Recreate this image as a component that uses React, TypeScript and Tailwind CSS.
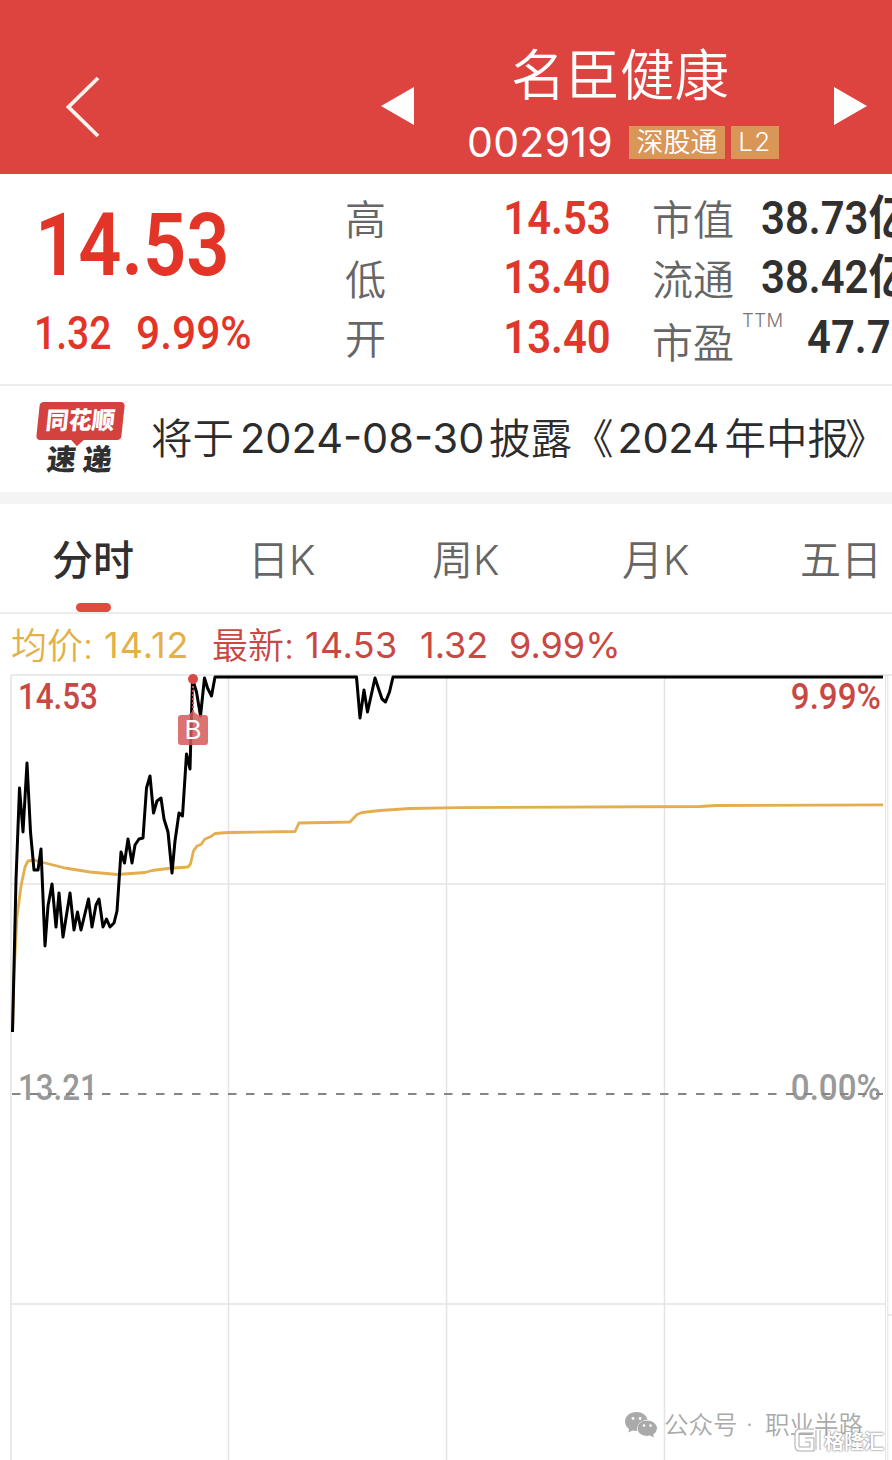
import type { ReactNode } from "react";

const CJK = "font-['Inter','Noto_Sans_CJK_SC',sans-serif]";
const DIN = "font-['Roboto','Noto_Sans_CJK_SC',sans-serif]";

const PRICE =
  "12.5,1032 16,880 19.5,788 23,832 27,763 30.5,832 34,870 38,870 41,849 45,946 48,906 52,884 56,927 59,893 63,937 70,893 74,930 77.5,912 81,930 88.5,899 92,927 96,905 99,899 103,927 106.5,919 110,927 114,923 117,911 121,852 124.5,863 128,839 132,863 135,845 139,839 143,838 146.5,788 150,776 153.5,813 157,801 161,798 164,819 168,832 172,873 175,841 179,813 182.5,816 186.5,754 190,769 192.5,679 196.5,692 200.5,716 204.5,678 207.5,688 211.5,696 215,677 356.5,677 360,718 364,690 367.5,712 375,678 382,699 385.5,702 389.5,692 393,677 883,677";

const AVERAGE =
  "M12.5 1032L14 975L17 917L21 886L25 867L28 861L34 860L45 863L65 868L90 872L117 874.500L145 872.500L152 870.500L168 868.500L188 867L190.500 864L193.500 851L197 846L201 844.500L205 839L211 836.500L215 833.500L228 832.500L295 831.500L299 823L350 822L357 814.500L362 812.500L380 810.500L410 808.500L460 807.700L700 806.500L716 805.500L883 804.800";

function Stat({ label, value, mark }: { label: string; value: string; mark?: string }) {
  return (
    <div className="flex h-[59.5px] items-center whitespace-nowrap">
      <span className={"flex w-[84px] shrink-0 text-[41px] text-[#666] " + (mark ? "pt-[16px]" : "pt-[8px]")}>{label}</span>
      {mark && <span className="-mt-8 ml-[6px] w-[65px] shrink-0 text-[18.5px] tracking-[0.5px] text-[#777]">{mark}</span>}
      <span className={DIN + " mt-px origin-left scale-x-[0.89] text-[47px] font-semibold text-[#303030] " + (mark ? "" : "ml-[25px]")}>{value}</span>
    </div>
  );
}

function Range({ label, value }: { label: string; value: string }) {
  return (
    <div className="flex h-[59.5px] items-center justify-between">
      <span className="pt-[8px] text-[41px] text-[#666]">{label}</span>
      <span className={DIN + " mt-px origin-right scale-x-[0.89] text-[47px] font-semibold text-[#de382c]"}>{value}</span>
    </div>
  );
}

function Tab({ children, className }: { children: ReactNode; className: string }) {
  return <span className={"shrink-0 whitespace-nowrap " + className}>{children}</span>;
}

export default function App() {
  return (
    <div className={CJK + " flex h-[1460px] w-[892px] flex-col overflow-hidden bg-white leading-none"}>
      <header className="flex h-[174px] shrink-0 bg-[#dd443f] text-white">
        <svg className="ml-[60px] mt-[70px] h-[72px] w-[44px]" viewBox="0 0 44 72" fill="none">
          <path d="M38 8L8.500 37L38 66" stroke="#fff3ee" strokeWidth="3.800" />
        </svg>
        <svg className="ml-[275px] mt-[85px] h-[42px] w-[38px]" viewBox="0 0 38 42">
          <path d="M2 21L35 2V40Z" fill="white" />
        </svg>
        <div className="ml-[50px] flex w-[313px] flex-col pt-[45px]">
          <h1 className="ml-[44px] text-[54.5px] font-[350] leading-[60px]">名臣健康</h1>
          <div className="mt-[15px] flex h-[44px] items-center">
            <span className="w-[162px] shrink-0 text-[41px] font-normal tracking-[0.3px]">002919</span>
            <span className="flex h-[33px] w-[96px] shrink-0 items-center justify-center bg-[#d99656] text-[27px] font-[350]">深股通</span>
            <span className="ml-[6px] flex h-[33px] w-[48px] shrink-0 items-center justify-center bg-[#d99656] text-[26px] font-[350] tracking-[1.5px]">L2</span>
          </div>
        </div>
        <svg className="ml-[52px] mt-[85px] h-[42px] w-[38px]" viewBox="0 0 38 42">
          <path d="M35 21L2 2V40Z" fill="white" />
        </svg>
      </header>

      <section className="flex h-[212px] shrink-0 border-b-2 border-[#ececec]">
        <div className={DIN + " w-[345px] text-[#e23528]"}>
          <div className="ml-[35px] mt-[27px] origin-left scale-x-[0.86] text-[88px] font-semibold leading-[88px]">14.53</div>
          <div className="ml-[34px] mt-[20px] flex text-[47px] font-medium leading-[47px]">
            <span className="w-[102px] origin-left scale-x-[0.83]">1.32</span>
            <span className="origin-left scale-x-[0.905]">9.99%</span>
          </div>
        </div>
        <div className="flex w-[266px] flex-col pt-[13px] font-[350]">
          <Range label="高" value="14.53" />
          <Range label="低" value="13.40" />
          <Range label="开" value="13.40" />
        </div>
        <div className="ml-[41px] flex w-[240px] flex-col overflow-hidden pt-[13px] font-[350]">
          <Stat label="市值" value="38.73亿" />
          <Stat label="流通" value="38.42亿" />
          <Stat label="市盈" value="47.72" mark="TTM" />
        </div>
      </section>

      <section className="flex h-[106px] shrink-0 items-center">
        <div className="-mt-[2px] ml-[38px] flex w-[113px] shrink-0 flex-col">
          <div className="relative flex h-[38px] w-[85px] -skew-x-6 items-center justify-center rounded-[4px] bg-[#d3423f] text-[23px] font-black text-white">
            <span className="scale-y-[1.05]">同花顺</span>
            <span className="absolute -bottom-[4px] left-[36px] size-[11px] rotate-45 bg-[#d3423f]" />
          </div>
          <div className="ml-[9px] mt-[5px] flex -skew-x-6 gap-[7px] text-[29px] font-black leading-[29px] text-[#303030]">
            <span>速</span><span>递</span>
          </div>
        </div>
        <p className="flex shrink-0 items-center whitespace-nowrap text-[41.500px] font-[350] text-[#2c2c2c]">
          <span className="pt-[2px]">将于</span>
          <span className="ml-[6px] w-[249px] text-[41.500px] font-normal">2024-08-30</span>
          <span className="pt-[2px]">披露《</span>
          <span className="ml-[4px] w-[107px] text-[41.500px] font-normal tracking-[-0.4px]">2024</span>
          <span className="pt-[2px]">年中报</span>
          <span className="-ml-[4px] w-[42px] pt-[2px]">》</span>
        </p>
      </section>
      <div className="h-[12px] shrink-0 bg-[#f4f4f4]" />

      <nav className="flex h-[110px] shrink-0 border-b-2 border-[#ececec] pt-[35px] text-[41px] font-[350] leading-[42px] text-[#666]">
        <Tab className="relative ml-[52px] w-[196px] font-medium text-[#303030]">
          分时
          <span className="absolute left-[24px] top-[64px] h-[9px] w-[35px] rounded-full bg-[#e04b40]" />
        </Tab>
        <Tab className="w-[184px]">日K</Tab>
        <Tab className="w-[190px]">周K</Tab>
        <Tab className="w-[178px]">月K</Tab>
        <Tab className="w-[92px]">五日</Tab>
      </nav>

      <div className="flex h-[60px] shrink-0 items-center whitespace-nowrap pl-[11px] pt-[2px] text-[36px] font-[350] text-[#c84844]">
        <span className="flex w-[201px] items-center text-[#e3b049]">
          <span className="w-[93px] pt-[2px]">均价:</span>
          <span className="font-normal tracking-[1px]">14.12</span>
        </span>
        <span className="flex w-[208px] items-center">
          <span className="w-[93px] pt-[2px]">最新:</span>
          <span className="font-normal tracking-[0.4px]">14.53</span>
        </span>
        <span className="w-[89px] font-normal">1.32</span>
        <span className="font-normal">9.99%</span>
      </div>

      <main className="relative h-[786px] shrink-0">
        <span className={DIN + " absolute left-[18px] top-[5px] origin-left scale-x-[0.87] text-[36px] font-medium text-[#c84844]"}>14.53</span>
        <span className={DIN + " absolute right-[11px] top-[5px] origin-right scale-x-[0.92] text-[36px] font-medium text-[#c84844]"}>9.99%</span>
        <span className={DIN + " absolute left-[18px] top-[396px] origin-left scale-x-[0.87] text-[36px] font-medium text-[#999]"}>13.21</span>
        <span className={DIN + " absolute right-[11px] top-[396px] origin-right scale-x-[0.92] text-[36px] font-medium text-[#999]"}>0.00%</span>
        <svg className="relative block h-[786px] w-[892px]" viewBox="0 674 892 786" fill="none">
          <g stroke="#e4e4e4" strokeWidth="1.500">
            <path d="M11 675H892M11 884H886M11 1304H886M887 1315H892" />
            <path d="M11 675V1460M228.500 675V1460M446.500 675V1460M664.500 675V1460" />
            <path d="M885.500 675V1460M887.800 675V1460" strokeWidth="1.100" />
          </g>
          <path d="M12 1094H883" stroke="#858585" strokeWidth="1.800" strokeDasharray="8.500 9.500" />
          <path d={AVERAGE} stroke="#e3ad50" strokeWidth="2.800" strokeLinejoin="round" />
          <polyline points={PRICE} stroke="#000" strokeWidth="3" strokeLinejoin="round" />
          <path d="M193 682V712" stroke="#d94a45" strokeWidth="2" strokeDasharray="2 2" />
          <circle cx="193" cy="679" r="5" fill="#d94a45" />
          <path d="M181 715H188L193 711L198 715H205Q208 715 208 718V742Q208 745 205 745H181Q178 745 178 742V718Q178 715 181 715Z" fill="#d65a5a" fillOpacity=".85" />
        </svg>
        <span className="absolute left-[178px] top-[41px] flex h-[30px] w-[30px] items-center justify-center text-[26px] text-white">B</span>

        <div className="absolute left-[625px] top-[737px] flex items-center whitespace-nowrap text-[24.5px] font-[350] text-[#aaa]">
          <svg className="mr-[7px] h-[27px] w-[32px]" viewBox="0 0 32 27">
            <path d="M11.500 1C5 1 0 5 0 10.500C0 13.500 1.500 16 4 18L3.500 21.500L7.500 19.500L12 20C11 14 15 9.500 22.500 8.500C21.500 4 17 1 11.500 1Z" fill="#aaa" />
            <path d="M22 9.500C16.500 9.500 12.500 13 12.500 17.300C12.500 21.500 16.500 25 22 25L25 24.500L29 26.500L28.200 23.500C30.500 22 32 19.900 32 17.300C32 13 27.500 9.500 22 9.500Z" fill="#aaa" />
            <g fill="white"><circle cx="8" cy="7.500" r="1.400" /><circle cx="15" cy="7.500" r="1.400" /><circle cx="19" cy="14.500" r="1.200" /><circle cx="25.500" cy="14.500" r="1.200" /></g>
          </svg>
          <span className="w-[82px] pt-px">公众号</span>
          <span className="w-[19px]">·</span>
          <span className="pt-px">职业半路</span>
        </div>
        <div className="absolute left-[794px] top-[753px] flex items-center text-[20px] font-bold text-white [text-shadow:0_0_2px_#888,0_0_2px_#888]">
          <svg className="mr-[2px] h-[26px] w-[28px]" viewBox="0 0 28 26" fill="none">
            <path d="M20 4H6Q3 4 3 7V19Q3 22 6 22H18V13H11M24 3V23" stroke="#aaa" strokeWidth="5" />
            <path d="M20 4H6Q3 4 3 7V19Q3 22 6 22H18V13H11M24 3V23" stroke="white" strokeWidth="3" />
          </svg>
          <span className="pt-[3px]">格隆汇</span>
        </div>
      </main>
    </div>
  );
}
